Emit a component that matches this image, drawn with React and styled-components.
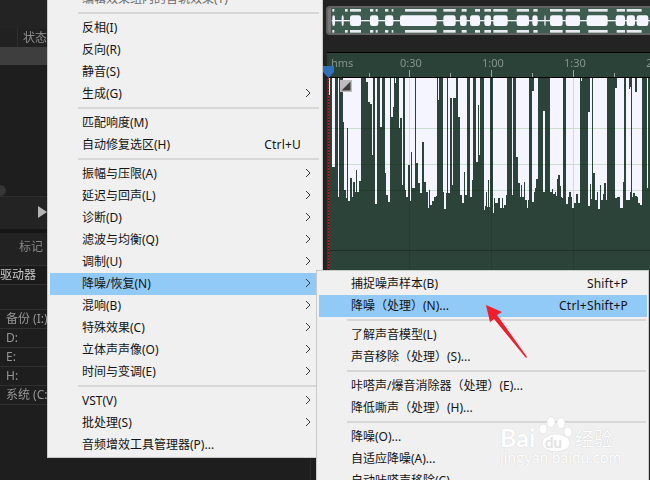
import React from 'react'
import styled, { createGlobalStyle } from 'styled-components'

const GlobalStyle = createGlobalStyle`
    html, body {
        margin: 0;
        padding: 0;
        background: #1e1e1e;
    }
    body {
        font-family: "Noto Sans", "Noto Sans CJK SC", sans-serif;
        font-size: 12px;
    }
`

const mainItems = [
    { label: '编辑效果组内的音轨效果(T)', disabled: true },
    'sep',
    { label: '反相(I)' },
    { label: '反向(R)' },
    { label: '静音(S)' },
    { label: '生成(G)', more: true },
    'sep',
    { label: '匹配响度(M)' },
    { label: '自动修复选区(H)', keys: 'Ctrl+U' },
    'sep',
    { label: '振幅与压限(A)', more: true },
    { label: '延迟与回声(L)', more: true },
    { label: '诊断(D)', more: true },
    { label: '滤波与均衡(Q)', more: true },
    { label: '调制(U)', more: true },
    { label: '降噪/恢复(N)', more: true, active: true },
    { label: '混响(B)', more: true },
    { label: '特殊效果(C)', more: true },
    { label: '立体声声像(O)', more: true },
    { label: '时间与变调(E)', more: true },
    'sep',
    { label: 'VST(V)', more: true },
    { label: '批处理(S)', more: true },
    { label: '音频增效工具管理器(P)...' },
]

const subItems = [
    { label: '捕捉噪声样本(B)', keys: 'Shift+P' },
    { label: '降噪（处理）(N)...', keys: 'Ctrl+Shift+P', active: true },
    'sep',
    { label: '了解声音模型(L)' },
    { label: '声音移除（处理）(S)...' },
    'sep',
    { label: '咔嗒声/爆音消除器（处理）(E)...' },
    { label: '降低嘶声（处理）(H)...' },
    'sep',
    { label: '降噪(O)...' },
    { label: '自适应降噪(A)...' },
    { label: '自动咔嗒声移除(C)' },
]

const drives = ['备份 (I:)', 'D:', 'E:', 'H:', '系统 (C:)']

// [x0, x1, bottom, top] traced off the clip, 3 units per screen pixel
const waveRuns = [
    [12,16,60],[22,30,275],[40,43,365],[54,57,140],[57,62,345],[62,66,370],[66,70,160],[70,75,378],[75,80,310],
    [80,85,365],[85,90,320],[90,94,350],[94,97,285],[97,103,350],[103,108,318],[124,128,22],[128,134,80],[134,140,88],
    [140,143,240],[150,156,388],[165,170,155],[180,184,295],[184,188,360],[188,195,382],[198,204,125],[204,207,95],
    [210,214,25],[222,226,160],[226,232,130],[232,235,330],[240,244,345],[244,250,365],[250,254,270],[254,258,378],
    [258,262,232],[262,270,340],[274,278,265],[278,286,325],[286,292,355],[292,296,200],[296,303,320],[303,308,350],
    [308,312,400],[312,316,345],[316,320,390],[320,326,378],[326,332,365],[332,336,362],[338,342,75],[354,358,350],
    [358,362,403],[362,366,355],[370,376,355],[376,380,68],[380,384,330],[384,392,70],[398,404,125],[405,410,360],
    [410,416,385],[416,420,290],[420,425,360],[435,441,365],[441,445,315],[452,458,260],[458,462,90],[462,466,240],
    [477,480,405],[480,484,392],[484,485,350],[485,490,395],[490,493,315],[493,495,395],[503,508,415],[508,511,368],
    [511,518,385],[518,525,370],[525,530,400],[530,534,370],[534,538,398],[538,542,390],[542,546,360],[561,564,360],
    [572,574,40],[574,580,245],[580,584,325],[584,588,365],[588,592,330],[592,596,365],[596,600,320],[600,605,375],
    [605,608,398],[608,612,375],[622,626,380,48],[626,630,350],[630,634,340],[634,639,312],[655,660,352,108],
    [675,680,350],[680,684,342],[684,690,358],[690,694,350],[694,697,362],[697,700,312],[700,704,300],[704,708,332],
    [708,712,365],[712,714,370],[723,728,388],[728,733,365],[733,737,350],[737,742,365],[742,747,400],[747,752,385],
    [752,757,358],[757,760,358],[760,765,385],[768,771,18],[789,795,392,110],[795,798,328],[798,802,372],[805,810,295],
    [810,815,375],[815,819,350],[819,824,402],[824,829,330],[829,834,375],[834,838,358],[838,842,325],[842,846,375],
    [871,876,370,40],[876,884,365],[884,888,400],[888,893,398],[893,897,320],[903,912,375],[912,916,375,42],
    [916,918,350,35],[921,925,365,10],[925,931,355],[931,935,362,50],[935,940,365],[940,945,385],[945,950,390],[965,969,340],
]

const overviewMid = [
    [22,30],[50,56],[75,108],[135,160],[180,205],[225,335],[355,392],[405,425],[435,465],[478,498],[505,548],
    [575,612],[622,638],[658,662],[675,713],[722,765],[785,848],[872,900],[905,930],[935,970],
]

const overviewOuter = [
    [22,28],[60,68],[75,108],[135,145],[152,158],[180,190],[200,205],[240,335],[355,392],[410,425],[450,465],
    [478,498],[505,548],[575,612],[625,638],[675,713],[722,765],[790,848],[875,900],[905,950],
]

const rulerLabels = [
    { x: 4, text: 'hms' },
    { x: 73, text: '0:30' },
    { x: 155, text: '1:00' },
    { x: 237, text: '1:30' },
    { x: 319, text: '2:00' },
]

const rulerTicks = [
    { x: 42, h: 4 }, { x: 82, h: 7 }, { x: 123, h: 4 }, { x: 164, h: 7 },
    { x: 205, h: 4 }, { x: 246, h: 7 }, { x: 287, h: 4 },
]

const Chevron = () => (
    <svg width="6" height="10" viewBox="0 0 6 10">
        <polyline points="1,1 5,5 1,9" fill="none" stroke="#3a3a3a" strokeWidth="1" />
    </svg>
)

const Menu = ({ items, Wrap }) => (
    <Wrap>
        {items.map((item, i) => item === 'sep' ? (
            <Separator key={i} />
        ) : (
            <MenuRow key={i} $active={item.active} $disabled={item.disabled}>
                <MenuLabel>{item.label}</MenuLabel>
                {item.keys && <MenuKeys>{item.keys}</MenuKeys>}
                <MenuArrow>{item.more && <Chevron />}</MenuArrow>
            </MenuRow>
        ))}
    </Wrap>
)

const App = () => {
    return (
        <>
            <GlobalStyle />
            <Page>
                <LeftPanel>
                    <TopStrip />
                    <StatusHeader><HeaderText>状态</HeaderText></StatusHeader>
                    <SelectedRow />
                    <TrackList><ScrollKnob /></TrackList>
                    <Transport><PlayTriangle /></Transport>
                    <PanelGap />
                    <MarkerTabs><TabText>标记</TabText></MarkerTabs>
                    <DriveHeader>驱动器</DriveHeader>
                    <DriveSpacer />
                    {drives.map((d) => <DriveRow key={d}>{d}</DriveRow>)}
                    <PanelFiller />
                </LeftPanel>

                <RightPanel>
                    <Overview>
                        <OverviewHandle />
                        <svg width="330" height="25" viewBox="9 24 990 75">
                            <rect x="20" y="60" width="980" height="4" fill="#f4f5ff" />
                            {overviewMid.map(([a, b]) => (
                                <rect key={a} x={a} y="46" width={b - a} height="32" rx="7" fill="#f4f5ff" />
                            ))}
                            {overviewOuter.map(([a, b]) => (
                                <g key={a} fill="#e8ebef">
                                    <rect x={a} y="27" width={b - a} height="8" />
                                    <rect x={a} y="90" width={b - a} height="8" />
                                </g>
                            ))}
                        </svg>
                    </Overview>

                    <Timeline>
                        <Ruler>
                            {rulerLabels.map((l) => <RulerLabel key={l.text} $x={l.x}>{l.text}</RulerLabel>)}
                            {rulerTicks.map((t) => <RulerTick key={t.x} $x={t.x} $h={t.h} />)}
                        </Ruler>
                        <PlayheadMark width="11" height="12" viewBox="0 0 11 12">
                            <path d="M0 0H11V6L5.5 12L0 6Z" fill="#2f71b8" />
                        </PlayheadMark>
                        <WaveArea>
                            <svg width="323" height="192" viewBox="6 9 969 576" shapeRendering="crispEdges">
                                <rect x="6" y="9" width="969" height="576" fill="#2b4338" />
                                <rect x="6" y="525" width="969" height="3" fill="#1f3229" />
                                {waveRuns.map(([a, b, bottom, top = 9]) => (
                                    <rect key={a} x={a} y={top} width={b - a} height={bottom - top} fill="#f4f5ff" />
                                ))}
                                <GridLines>
                                    <rect x="6" y="159" width="969" height="3" />
                                    <rect x="6" y="267" width="969" height="3" />
                                    <rect x="6" y="345" width="969" height="3" />
                                    <rect x="252" y="9" width="3" height="576" />
                                    <rect x="498" y="9" width="3" height="576" />
                                    <rect x="744" y="9" width="3" height="576" />
                                </GridLines>
                            </svg>
                            <PlayLine />
                            <FadeHandle width="12" height="12" viewBox="0 0 12 12">
                                <rect width="12" height="12" fill="#bcbcbc" />
                                <path d="M1.5 10.5L10.5 1.5V10.5Z" fill="#3c3c3c" />
                            </FadeHandle>
                        </WaveArea>
                    </Timeline>
                </RightPanel>

                <Menu items={mainItems} Wrap={MainMenu} />
                <Menu items={subItems} Wrap={SubMenu} />

                <RedArrow width="50" height="60" viewBox="0 0 50 60">
                    <path d="M1 1L17 8L12 11L42 53L41 54L9 15L5 18Z" fill="#f01d2c" />
                </RedArrow>

                <Watermark>
                    <BaiText>Bai</BaiText>
                    <PawLogo>
                        <svg width="34" height="36" viewBox="0 0 34 36">
                            <g fill="#ffffff" stroke="#dcdcdc" strokeWidth="0.6">
                                <ellipse cx="4" cy="13" rx="4" ry="5" />
                                <ellipse cx="12" cy="6" rx="4" ry="5.5" />
                                <ellipse cx="22" cy="7" rx="4" ry="5.5" />
                                <ellipse cx="29" cy="16" rx="4" ry="5" />
                                <ellipse cx="17" cy="27" rx="14" ry="9" />
                            </g>
                        </svg>
                        <DuText>du</DuText>
                    </PawLogo>
                    <JingText>经验</JingText>
                    <SiteText>jingyan.baidu.com</SiteText>
                </Watermark>
            </Page>
        </>
    )
}

const Page = styled.div`
    position: relative;
    width: 650px;
    height: 480px;
    overflow: hidden;
    display: flex;
    background: #1e1e1e;
`

const LeftPanel = styled.div`
    width: 323px;
    height: 480px;
    display: flex;
    flex-direction: column;
    flex-shrink: 0;
    background: #1e1e1e;
    overflow: hidden;
`

const TopStrip = styled.div`
    height: 28px;
    background: #232323;
`

const StatusHeader = styled.div`
    height: 19px;
    display: flex;
    align-items: center;
    padding-left: 17px;
    background: #212121;
`

const HeaderText = styled.span`
    padding-left: 5px;
    border-left: 1px solid #2e2e2e;
    color: #8f8f8f;
    line-height: 19px;
`

const SelectedRow = styled.div`
    height: 18px;
    background: #3e3e3e;
`

const TrackList = styled.div`
    position: relative;
    height: 131px;
    background: #1e1e1e;
    border-bottom: 1px solid #2e2e2e;
`

const ScrollKnob = styled.div`
    position: absolute;
    left: -6px;
    bottom: 0;
    width: 12px;
    height: 11px;
    border-radius: 50%;
    background: #363636;
`

const Transport = styled.div`
    height: 32px;
    display: flex;
    align-items: center;
    padding: 0 0 3px 38px;
    box-sizing: border-box;
    background: #232323;
`

const PlayTriangle = styled.div`
    width: 0;
    height: 0;
    border-left: 9px solid #b4b4b4;
    border-top: 6px solid transparent;
    border-bottom: 6px solid transparent;
`

const PanelGap = styled.div`
    height: 4px;
    background: #161616;
`

const MarkerTabs = styled.div`
    height: 32px;
    box-sizing: border-box;
    display: flex;
    align-items: center;
    padding: 0 0 6px 19px;
    background: #222222;
`

const TabText = styled.span`
    color: #868686;
`

const DriveHeader = styled.div`
    height: 18px;
    line-height: 18px;
    padding-left: 0;
    background: #1a1a1a;
    color: #c8c8c8;
    border-top: 1px solid #303030;
    border-bottom: 1px solid #303030;
`

const DriveSpacer = styled.div`
    height: 24px;
    border-bottom: 1px solid #303030;
`

const DriveRow = styled.div`
    height: 18px;
    line-height: 18px;
    padding-left: 6px;
    color: #969696;
    border-bottom: 1px solid #303030;
`

const PanelFiller = styled.div`
    flex: 1;
    width: 310px;
    border-right: 1px solid #2c2c2c;
`

const RightPanel = styled.div`
    flex: 1;
    min-width: 0;
    height: 480px;
    display: flex;
    flex-direction: column;
    gap: 17px;
    padding: 6px 0 0 3px;
    box-sizing: border-box;
    background: #232323;
    overflow: hidden;
`

const Overview = styled.div`
    position: relative;
    width: 340px;
    height: 29px;
    flex-shrink: 0;
    box-sizing: border-box;
    border: 2px solid #626262;
    border-radius: 4px;
    background: #3f5c50;
    overflow: hidden;
`

const OverviewHandle = styled.div`
    position: absolute;
    left: 0;
    top: 0;
    width: 3px;
    height: 25px;
    background: #777777;
`

const Timeline = styled.div`
    position: relative;
    margin-left: 1px;
    border-top: 1px solid #000000;
    flex-shrink: 0;
`

const Ruler = styled.div`
    position: relative;
    height: 24px;
    background: #2b4238;
    border-bottom: 1px solid #000000;
`

const RulerLabel = styled.span`
    position: absolute;
    left: ${(props) => props.$x}px;
    top: 1px;
    line-height: 18px;
    font-family: "Noto Sans", sans-serif;
    font-size: 11px;
    color: #84948c;
`

const RulerTick = styled.div`
    position: absolute;
    left: ${(props) => props.$x}px;
    bottom: 0;
    width: 1px;
    height: ${(props) => props.$h}px;
    background: #9aa8a1;
`

const PlayheadMark = styled.svg`
    position: absolute;
    left: -4px;
    top: 13px;
    display: block;
`

const WaveArea = styled.div`
    position: relative;
    height: 192px;
    svg {
        display: block;
    }
`

const GridLines = styled.g`
    fill: #d3e8d0;
    mix-blend-mode: multiply;
`

const PlayLine = styled.div`
    position: absolute;
    left: 1px;
    top: 0;
    bottom: 0;
    width: 1px;
    background: repeating-linear-gradient(to bottom, #b3202a 0 2px, #1a1a1a 2px 3px);
`

const FadeHandle = styled.svg`
    position: absolute;
    left: 13px;
    top: 2px;
`

const BaseMenu = styled.div`
    position: absolute;
    box-sizing: border-box;
    background: #f0f0f0;
    border: 1px solid #c9c9c9;
    padding: 2px;
    display: flex;
    flex-direction: column;
`

const MainMenu = styled(BaseMenu)`
    left: 47px;
    top: -15px;
    width: 276px;
    padding-bottom: 1px;
`

const SubMenu = styled(BaseMenu)`
    left: 316px;
    top: 270px;
    width: 333px;
    height: 230px;
    padding-right: 1px;
`

const MenuRow = styled.div`
    height: 22px;
    box-sizing: border-box;
    flex-shrink: 0;
    display: flex;
    align-items: center;
    padding: 0 9px 2px 32px;
    color: ${(props) => (props.$disabled ? '#6d6d6d' : '#141414')};
    background: ${(props) => (props.$active ? '#91c9f7' : 'transparent')};
    white-space: nowrap;
`

const MenuLabel = styled.span`
    flex: 1;
`

const MenuKeys = styled.span`
    letter-spacing: 0.2px;
`

const MenuArrow = styled.span`
    width: 10px;
    display: flex;
    justify-content: flex-end;
`

const Separator = styled.div`
    height: 2px;
    flex-shrink: 0;
    margin: 2px 1px 3px 28px;
    background: #d7d7d7;
`

const RedArrow = styled.svg`
    position: absolute;
    left: 485px;
    top: 304px;
`

const Watermark = styled.div`
    position: absolute;
    left: 500px;
    top: 410px;
    width: 120px;
    height: 56px;
    color: #ffffff;
    pointer-events: none;
`

const BaiText = styled.span`
    position: absolute;
    left: 0;
    top: 15px;
    font-family: "Lato", sans-serif;
    font-weight: 700;
    font-size: 25px;
    line-height: 24px;
    text-shadow: 0 0 1px #c4c4c4;
`

const PawLogo = styled.div`
    position: absolute;
    left: 39px;
    top: 6px;
    width: 34px;
    height: 36px;
`

const DuText = styled.span`
    position: absolute;
    left: 6px;
    top: 19px;
    font-family: "Lato", sans-serif;
    font-weight: 700;
    font-size: 15px;
    line-height: 14px;
    color: #e2e2e2;
`

const JingText = styled.span`
    position: absolute;
    left: 75px;
    top: 17px;
    font-family: "Noto Sans CJK SC", sans-serif;
    font-size: 19px;
    line-height: 22px;
    text-shadow: 0 0 1px #b8b8b8;
`

const SiteText = styled.span`
    position: absolute;
    left: 0;
    top: 41px;
    font-family: "Lato", sans-serif;
    font-size: 15px;
    line-height: 13px;
    letter-spacing: 0.2px;
    white-space: nowrap;
    text-shadow: 0 0 1px #c4c4c4;
`

export default App
